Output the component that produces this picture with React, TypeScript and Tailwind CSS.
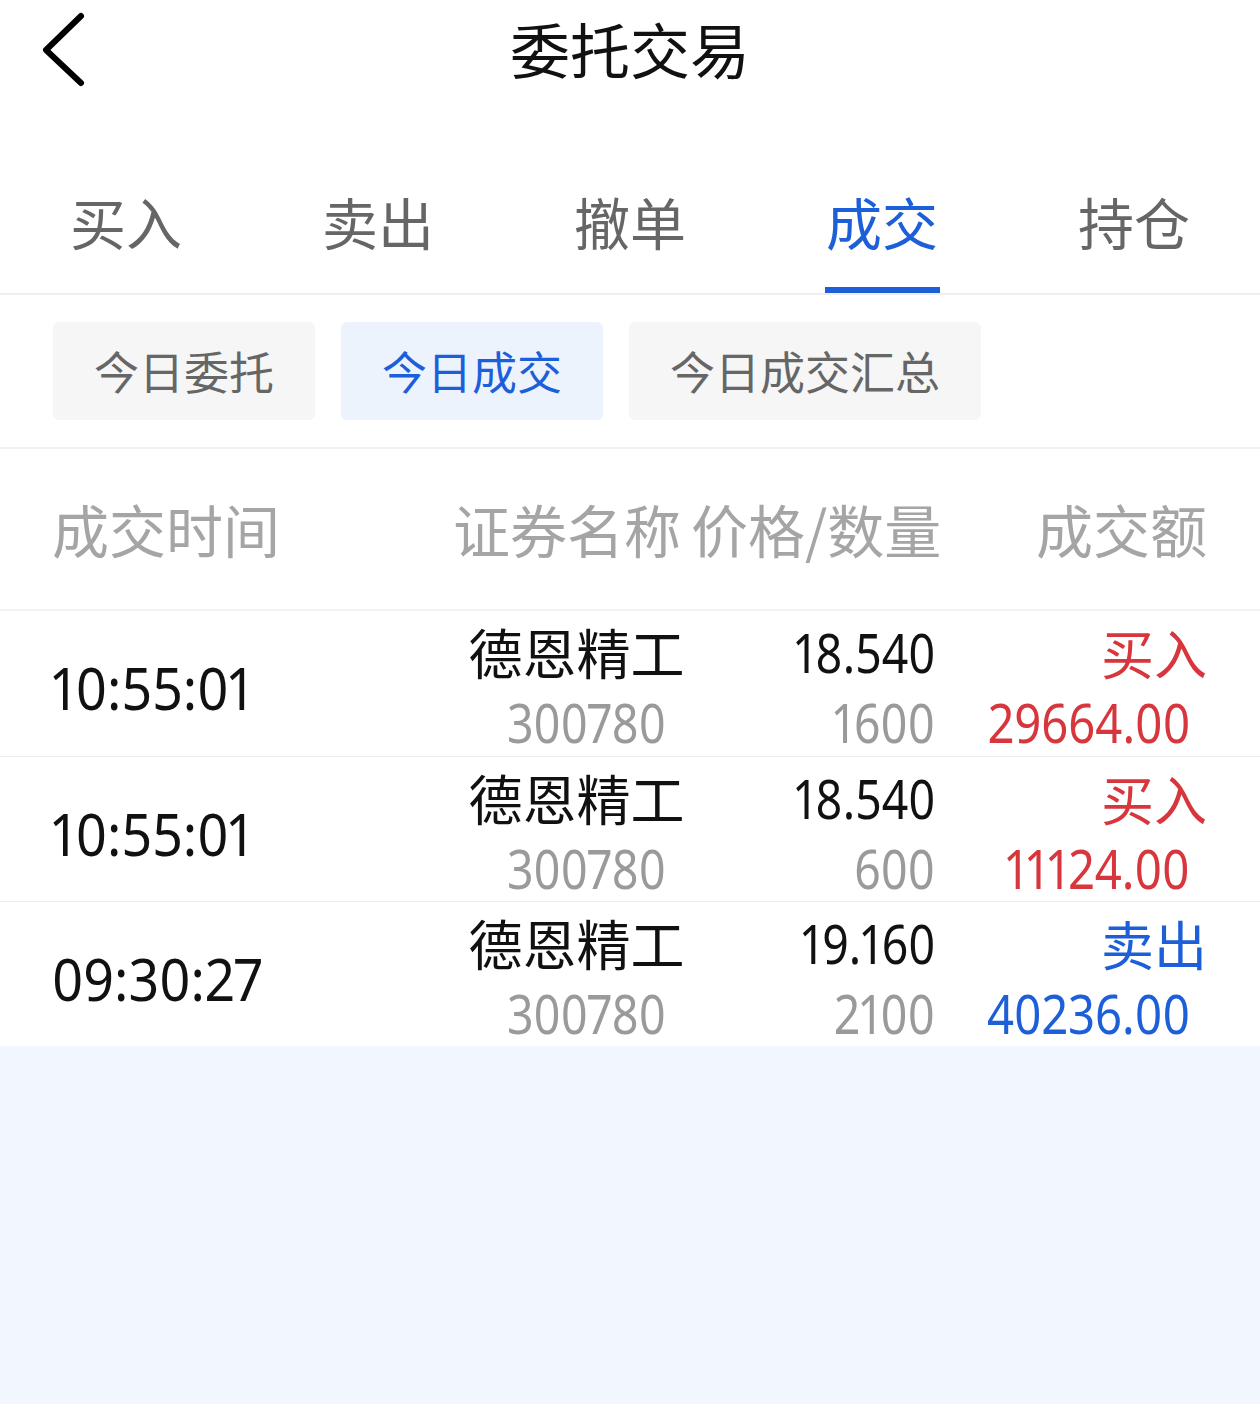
import React from "react";

type Trade = {
  time: string;
  name: string;
  code: string;
  price: string;
  qty: string;
  side: "买入" | "卖出";
  amount: string;
};

const trades: Trade[] = [
  { time: "10:55:01", name: "德恩精工", code: "300780", price: "18.540", qty: "1600", side: "买入", amount: "29664.00" },
  { time: "10:55:01", name: "德恩精工", code: "300780", price: "18.540", qty: "600", side: "买入", amount: "11124.00" },
  { time: "09:30:27", name: "德恩精工", code: "300780", price: "19.160", qty: "2100", side: "卖出", amount: "40236.00" },
];

const tabs = ["买入", "卖出", "撤单", "成交", "持仓"];
const subTabs = ["今日委托", "今日成交", "今日成交汇总"];

// digits in the app font are narrow, squeeze Noto Sans a bit
const num = "font-['Noto_Sans',sans-serif] proportional-nums";

const TradeRow: React.FC<{ trade: Trade; first: boolean }> = ({ trade, first }) => {
  const color = trade.side === "买入" ? "text-[#d8363d]" : "text-[#1d5fd8]";
  return (
    <div
      className={`grid grid-cols-[401px_247px_235px_272px] h-[145px] pl-[52px] pr-[53px] ${
        first ? "" : "border-t border-[#ececec]"
      }`}
    >
      <div className="flex items-center pt-[6px]">
        <div className={`text-[59px] text-[#111] scale-x-[0.91] origin-left ${num}`}>{trade.time}</div>
      </div>
      <div className="flex flex-col items-center pt-[6px]">
        <div className="leading-[70px] text-[54px] text-[#111]">{trade.name}</div>
        <div className={`leading-[70px] text-[54px] text-[#9a9a9a] scale-x-[0.86] ml-[20px] ${num}`}>{trade.code}</div>
      </div>
      <div className={`flex flex-col items-end pt-[6px] ${num}`}>
        <div className="leading-[70px] text-[54px] text-[#111] scale-x-[0.86] origin-right">{trade.price}</div>
        <div className="leading-[70px] text-[54px] text-[#9a9a9a] scale-x-[0.86] origin-right">{trade.qty}</div>
      </div>
      <div className={`flex flex-col items-end pt-[6px] ${color}`}>
        <div className="leading-[70px] text-[53px]">{trade.side}</div>
        <div className={`leading-[70px] text-[55px] mr-[17px] scale-x-[0.86] origin-right ${num}`}>{trade.amount}</div>
      </div>
    </div>
  );
};

export default function App() {
  return (
    <div className="min-h-[1404px] w-full bg-[#f2f6fe] font-['Noto_Sans_CJK_SC',sans-serif]">
      <div className="bg-white">
        {/* header */}
        <div className="grid grid-cols-[1fr_auto_1fr] items-center h-[100px]">
          <div className="pl-[40px] pt-[2px]">
            <svg width="50" height="80" viewBox="0 0 50 80" fill="none">
              <path d="M41 5 L6 39 L41 72" stroke="#000" strokeWidth="6" strokeLinecap="round" strokeLinejoin="round" />
            </svg>
          </div>
          <div className="text-[60px] leading-[70px] text-[#111] -mt-[4px]">委托交易</div>
          <div />
        </div>

        {/* main tabs */}
        <div className="grid grid-cols-5 border-b-2 border-[#efefef] pt-[91px]">
          {tabs.map((t) => {
            const active = t === "成交";
            return (
              <div key={t} className="flex flex-col items-center">
                <div className={`text-[56px] leading-[60px] ${active ? "text-[#1d5fd8]" : "text-[#666]"}`}>{t}</div>
                <div className={`mt-[36px] h-[6px] w-[115px] ${active ? "bg-[#1d5fd8]" : "bg-transparent"}`} />
              </div>
            );
          })}
        </div>

        {/* sub tabs */}
        <div className="flex gap-[26px] px-[53px] py-[27px] border-b-2 border-[#f1f1f1]">
          {subTabs.map((t) => {
            const active = t === "今日成交";
            return (
              <div
                key={t}
                className={`h-[98px] px-[41px] flex items-center rounded-[6px] text-[45px] ${
                  active ? "bg-[#edf3fd] text-[#1d5fd8]" : "bg-[#f6f6f6] text-[#666]"
                }`}
              >
                {t}
              </div>
            );
          })}
        </div>

        {/* table header */}
        <div className="grid grid-cols-[401px_482px_272px] h-[162px] items-center pl-[52px] pr-[53px] border-b-2 border-[#f2f2f2] text-[57px] text-[#a5a5a5]">
          <div>成交时间</div>
          <div className="flex whitespace-nowrap">
            <span>证券名称</span>
            <span className="ml-[10px]">价格/数量</span>
          </div>
          <div className="text-right">成交额</div>
        </div>

        {trades.map((t, i) => (
          <TradeRow key={i} trade={t} first={i === 0} />
        ))}
      </div>
    </div>
  );
}
